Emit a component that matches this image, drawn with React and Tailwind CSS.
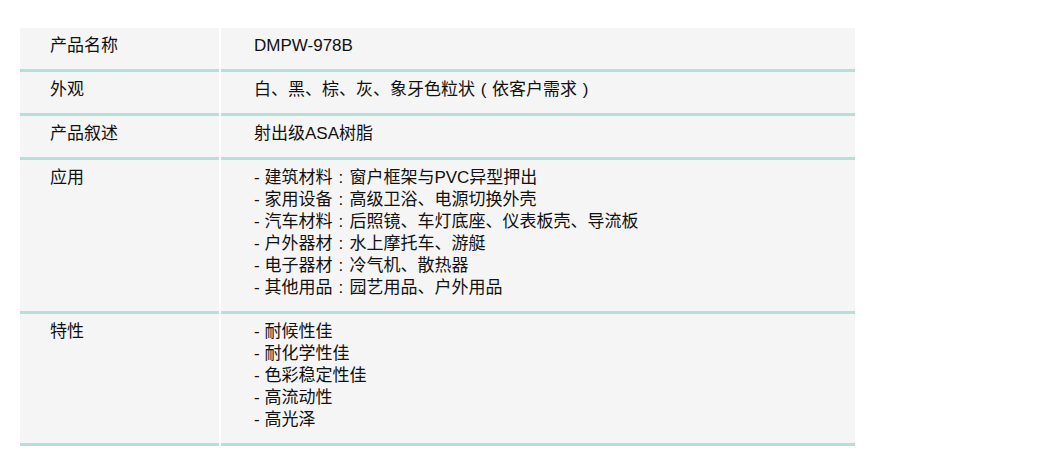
import React from "react";

const rows = [
  { label: "产品名称", lines: ["DMPW-978B"] },
  { label: "外观", lines: ["白、黑、棕、灰、象牙色粒状（依客户需求）"] },
  { label: "产品叙述", lines: ["射出级ASA树脂"] },
  {
    label: "应用",
    lines: [
      "- 建筑材料：窗户框架与PVC异型押出",
      "- 家用设备：高级卫浴、电源切换外壳",
      "- 汽车材料：后照镜、车灯底座、仪表板壳、导流板",
      "- 户外器材：水上摩托车、游艇",
      "- 电子器材：冷气机、散热器",
      "- 其他用品：园艺用品、户外用品",
    ],
  },
  {
    label: "特性",
    lines: ["- 耐候性佳", "- 耐化学性佳", "- 色彩稳定性佳", "- 高流动性", "- 高光泽"],
  },
];

const map = { "：": ":", "（": "(", "）": ")" };

function Line({ text }) {
  const parts = text.split(/([：（）])/);
  return (
    <div className="whitespace-pre h-[22px]">
      {parts.map((p, i) =>
        map[p] ? (
          <span key={i} className="inline-block w-[17px] text-center">
            {map[p]}
          </span>
        ) : (
          <React.Fragment key={i}>{p}</React.Fragment>
        )
      )}
    </div>
  );
}

export default function App() {
  return (
    <div
      className="w-[1059px] h-[454px] bg-white pt-[28px] pl-[20px] text-[#111] text-[17px] leading-[22px]"
      style={{ fontFamily: '"Liberation Sans", "Noto Sans CJK SC", sans-serif' }}
    >
      <div className="grid grid-cols-[199px_634px] gap-x-[2px] w-[835px]">
        {rows.map((r) => (
          <React.Fragment key={r.label}>
            <div className="bg-[#f5f5f5] border-b-[3px] border-[#b3e1d9] pl-[30px] pt-[7px] pb-[12px]">
              {r.label}
            </div>
            <div className="bg-[#f5f5f5] border-b-[3px] border-[#b3e1d9] pl-[33px] pt-[7px] pb-[12px]">
              {r.lines.map((l) => (
                <Line key={l} text={l} />
              ))}
            </div>
          </React.Fragment>
        ))}
      </div>
    </div>
  );
}
